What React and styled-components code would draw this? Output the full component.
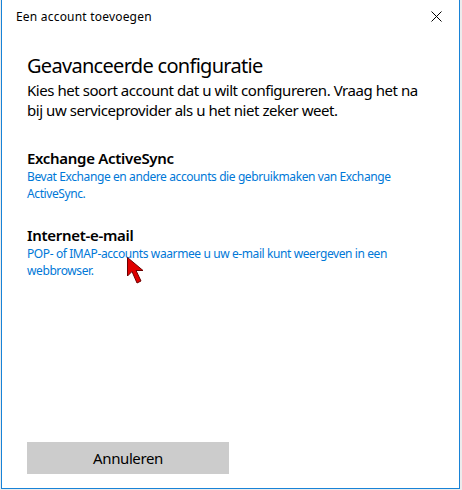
import React from "react";
import styled, { createGlobalStyle } from "styled-components";

const Global = createGlobalStyle`
  html, body { margin: 0; padding: 0; background: #ececec; }
  body { font-family: "Noto Sans", "Open Sans", sans-serif; }
  * { box-sizing: border-box; }
`;

const Window = styled.div`
  position: relative;
  margin-left: 1px;
  width: 459px;
  height: 489px;
  background: #ffffff;
  border: 1px solid #1883d7;
  border-top: none;
  display: flex;
  flex-direction: column;
`;

const TitleBar = styled.div`
  height: 32px;
  display: flex;
  align-items: center;
  justify-content: space-between;
  padding-left: 14px;
  font-size: 12px;
  letter-spacing: 0.2px;
  color: #000;
`;

const CloseButton = styled.div`
  width: 46px;
  height: 32px;
  display: flex;
  align-items: center;
  justify-content: center;
`;

const Content = styled.div`
  flex: 1;
  display: flex;
  flex-direction: column;
  padding: 20px 25px 14px 25px;
`;

const Heading = styled.h1`
  margin: 0;
  font-size: 20px;
  font-weight: 400;
  line-height: 28px;
  letter-spacing: -0.7px;
  color: #000;
`;

const Intro = styled.p`
  margin: 0 0 28px 0;
  font-size: 15px;
  line-height: 20px;
  letter-spacing: -0.45px;
  color: #000;
`;

const Option = styled.div`
  margin-bottom: ${(p) => p.$gap || 0}px;
`;

const OptionTitle = styled.div`
  font-size: 15px;
  font-weight: 600;
  line-height: 20px;
  letter-spacing: -0.3px;
  color: #000;
`;

const OptionDesc = styled.div`
  font-size: 12px;
  line-height: 17px;
  letter-spacing: -0.4px;
  color: #0078d7;
`;

const Spacer = styled.div`
  flex: 1;
`;

const CancelButton = styled.button`
  width: 202px;
  height: 32px;
  margin: 0;
  border: none;
  background: #cccccc;
  font-family: inherit;
  font-size: 15px;
  letter-spacing: -0.4px;
  color: #000;
`;

const Cursor = styled.svg`
  position: absolute;
  left: 123px;
  top: 256px;
`;

export default function App() {
  return (
    <>
      <Global />
      <Window>
        <TitleBar>
          <span>Een account toevoegen</span>
          <CloseButton>
            <svg width="11" height="11" viewBox="0 0 11 11">
              <path d="M0.5 0.5 L10.5 10.5 M10.5 0.5 L0.5 10.5" stroke="#000" strokeWidth="1" fill="none" />
            </svg>
          </CloseButton>
        </TitleBar>
        <Content>
          <Heading>Geavanceerde configuratie</Heading>
          <Intro>
            Kies het soort account dat u wilt configureren. Vraag het na bij uw serviceprovider als u het niet zeker weet.
          </Intro>
          <Option $gap={23}>
            <OptionTitle>Exchange ActiveSync</OptionTitle>
            <OptionDesc>Bevat Exchange en andere accounts die gebruikmaken van Exchange ActiveSync.</OptionDesc>
          </Option>
          <Option>
            <OptionTitle>Internet-e-mail</OptionTitle>
            <OptionDesc>POP- of IMAP-accounts waarmee u uw e-mail kunt weergeven in een webbrowser.</OptionDesc>
          </Option>
          <Spacer />
          <CancelButton>Annuleren</CancelButton>
        </Content>
        <Cursor width="22" height="30" viewBox="0 0 22 30">
          <path d="M2.5 1.5 L2.5 20 L7 15.5 L12 27 L16 25 L11 14.5 L18 14.5 Z" fill="#e00000" stroke="#6a0000" strokeWidth="1" strokeLinejoin="miter" />
        </Cursor>
      </Window>
    </>
  );
}
